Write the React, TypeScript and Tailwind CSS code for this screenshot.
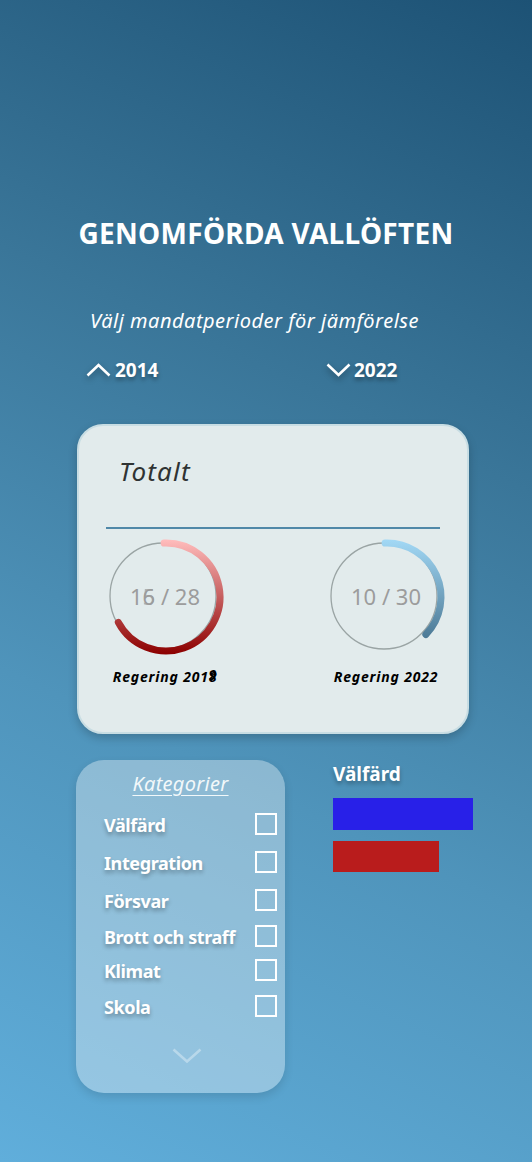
const font = { fontFamily: '"Noto Sans", "Open Sans", sans-serif' };

const categories = [
    { name: "Välfärd", h: "h-[38px]" },
    { name: "Integration", h: "h-[38px]" },
    { name: "Försvar", h: "h-[36px]" },
    { name: "Brott och straff", h: "h-[34px]" },
    { name: "Klimat", h: "h-[36px]" },
    { name: "Skola", h: "h-[36px]" },
];

function arcPath(cx: number, cy: number, r: number, from: number, to: number) {
    const rad = (d: number) => (d * Math.PI) / 180;
    const x1 = cx + r * Math.cos(rad(from));
    const y1 = cy + r * Math.sin(rad(from));
    const x2 = cx + r * Math.cos(rad(to));
    const y2 = cy + r * Math.sin(rad(to));
    const large = to - from > 180 ? 1 : 0;
    return `M ${x1} ${y1} A ${r} ${r} 0 ${large} 1 ${x2} ${y2}`;
}

interface GaugeProps {
    id: string;
    end: number;
    top: string;
    bottom: string;
    children: React.ReactNode;
}

const Gauge = ({ id, end, top, bottom, children }: GaugeProps) => {
    return (
        <div className="relative w-[130px] h-[130px]">
            <svg width="130" height="130" viewBox="0 0 130 130" className="absolute inset-0">
                <defs>
                    <linearGradient id={id} x1="0" y1="8" x2="0" y2="122" gradientUnits="userSpaceOnUse">
                        <stop offset="0" stopColor={top} />
                        <stop offset="1" stopColor={bottom} />
                    </linearGradient>
                </defs>
                <circle cx="63" cy="64" r="53" fill="none" stroke="#9aa4a4" strokeWidth="1.3" />
                <path d={arcPath(66, 65, 54, -92, end)} fill="none" stroke={`url(#${id})`} strokeWidth="7" strokeLinecap="round" />
            </svg>
            <div className="absolute inset-0 flex items-center justify-center text-[22px] text-[#9c9c9c]">
                {children}
            </div>
        </div>
    );
};

export default function App() {
    return (
        <div
            className="min-h-[1162px] w-[532px] bg-[linear-gradient(205deg,#1d5275_0%,#3a7699_35%,#4f94bb_65%,#60aedb_100%)] text-white overflow-hidden"
            style={font}
        >
            <h1 className="pt-[215px] text-center text-[28px] leading-[36px] font-bold tracking-[0.3px]">
                GENOMFÖRDA VALLÖFTEN
            </h1>

            <p className="mt-[57px] ml-[90px] text-[20px] leading-[26px] italic tracking-[0.5px]">
                Välj mandatperioder för jämförelse
            </p>

            <div className="mt-[22px] flex items-center text-[19px] font-bold [text-shadow:0_3px_4px_rgba(0,0,0,0.35)]">
                <div className="ml-[86px] flex items-center gap-[4px] w-[240px]">
                    <svg width="25" height="14" viewBox="0 0 25 14" className="drop-shadow-[0_3px_3px_rgba(0,0,0,0.35)]">
                        <path d="M1.5 12.5 L12.5 2 L23.5 12.5" fill="none" stroke="white" strokeWidth="2.6" />
                    </svg>
                    <span>2014</span>
                </div>
                <div className="flex items-center gap-[3px]">
                    <svg width="25" height="14" viewBox="0 0 25 14" className="drop-shadow-[0_3px_3px_rgba(0,0,0,0.35)]">
                        <path d="M1.5 1.5 L12.5 12 L23.5 1.5" fill="none" stroke="white" strokeWidth="2.6" />
                    </svg>
                    <span>2022</span>
                </div>
            </div>

            <div className="mt-[39px] ml-[77px] w-[392px] h-[310px] rounded-[26px] bg-[#e2ebec] border-2 border-[#c8dde3] shadow-[0_4px_10px_rgba(0,0,0,0.2)]">
                <div className="pt-[29px] pl-[40px] text-[26px] leading-[32px] italic text-[#2f3333] tracking-[1.2px]">
                    Totalt
                </div>
                <div className="mt-[40px] mx-[27px] h-[2px] bg-[#5088a8]" />

                <div className="mt-[3px] flex pl-[21px] gap-[91px]">
                    <div className="flex flex-col items-center">
                        <Gauge id="red" end={152} top="#ffbcbc" bottom="#8c0000">
                            <span>1</span>
                            <span className="relative">
                                6
                                <span className="absolute left-0 top-0 opacity-70">5</span>
                            </span>
                            <span>&nbsp;/ 28</span>
                        </Gauge>
                        <div className="mt-[7px] text-[14px] leading-[16px] font-bold italic text-black tracking-[0.8px]">
                            Regering 201
                            <span className="relative">
                                8
                                <span className="absolute left-0 top-0">9</span>
                            </span>
                        </div>
                    </div>
                    <div className="flex flex-col items-center">
                        <Gauge id="blue" end={44} top="#a2d8f5" bottom="#3e6a86">
                            <span>10 / 30</span>
                        </Gauge>
                        <div className="mt-[7px] text-[14px] leading-[16px] font-bold italic text-black tracking-[0.8px]">
                            Regering 2022
                        </div>
                    </div>
                </div>
            </div>

            <div className="mt-[26px] flex">
                <div className="ml-[76px] w-[209px] h-[333px] rounded-[28px] bg-white/35 shadow-[0_4px_10px_rgba(0,0,0,0.12)] flex flex-col">
                    <div className="pt-[10px] text-center text-[20px] leading-[28px] italic underline decoration-1 underline-offset-[4px] text-[#f2f8fa] tracking-[0.3px]">
                        Kategorier
                    </div>
                    <div className="mt-[15px] pl-[28px] pr-[8px] flex flex-col">
                        {categories.map((c) => (
                            <div key={c.name} className={`${c.h} flex items-start justify-between`}>
                                <span className="text-[18px] leading-[24px] font-bold tracking-[-0.4px] [text-shadow:0_3px_4px_rgba(0,0,0,0.3)]">
                                    {c.name}
                                </span>
                                <span className="w-[22px] h-[22px] border-2 border-white" />
                            </div>
                        ))}
                    </div>
                    <div className="mt-[17px] flex justify-center pl-[12px]">
                        <svg width="30" height="16" viewBox="0 0 30 16">
                            <path d="M1.5 1.5 L15 13.5 L28.5 1.5" fill="none" stroke="rgba(255,255,255,0.35)" strokeWidth="2.6" />
                        </svg>
                    </div>
                </div>

                <div className="ml-[48px] flex flex-col">
                    <div className="text-[19px] leading-[28px] font-bold [text-shadow:0_3px_4px_rgba(0,0,0,0.3)]">
                        Välfärd
                    </div>
                    <div className="mt-[10px] w-[140px] h-[32px] bg-[#2820e8]" />
                    <div className="mt-[11px] w-[106px] h-[31px] bg-[#b91c1c]" />
                </div>
            </div>
        </div>
    );
}
